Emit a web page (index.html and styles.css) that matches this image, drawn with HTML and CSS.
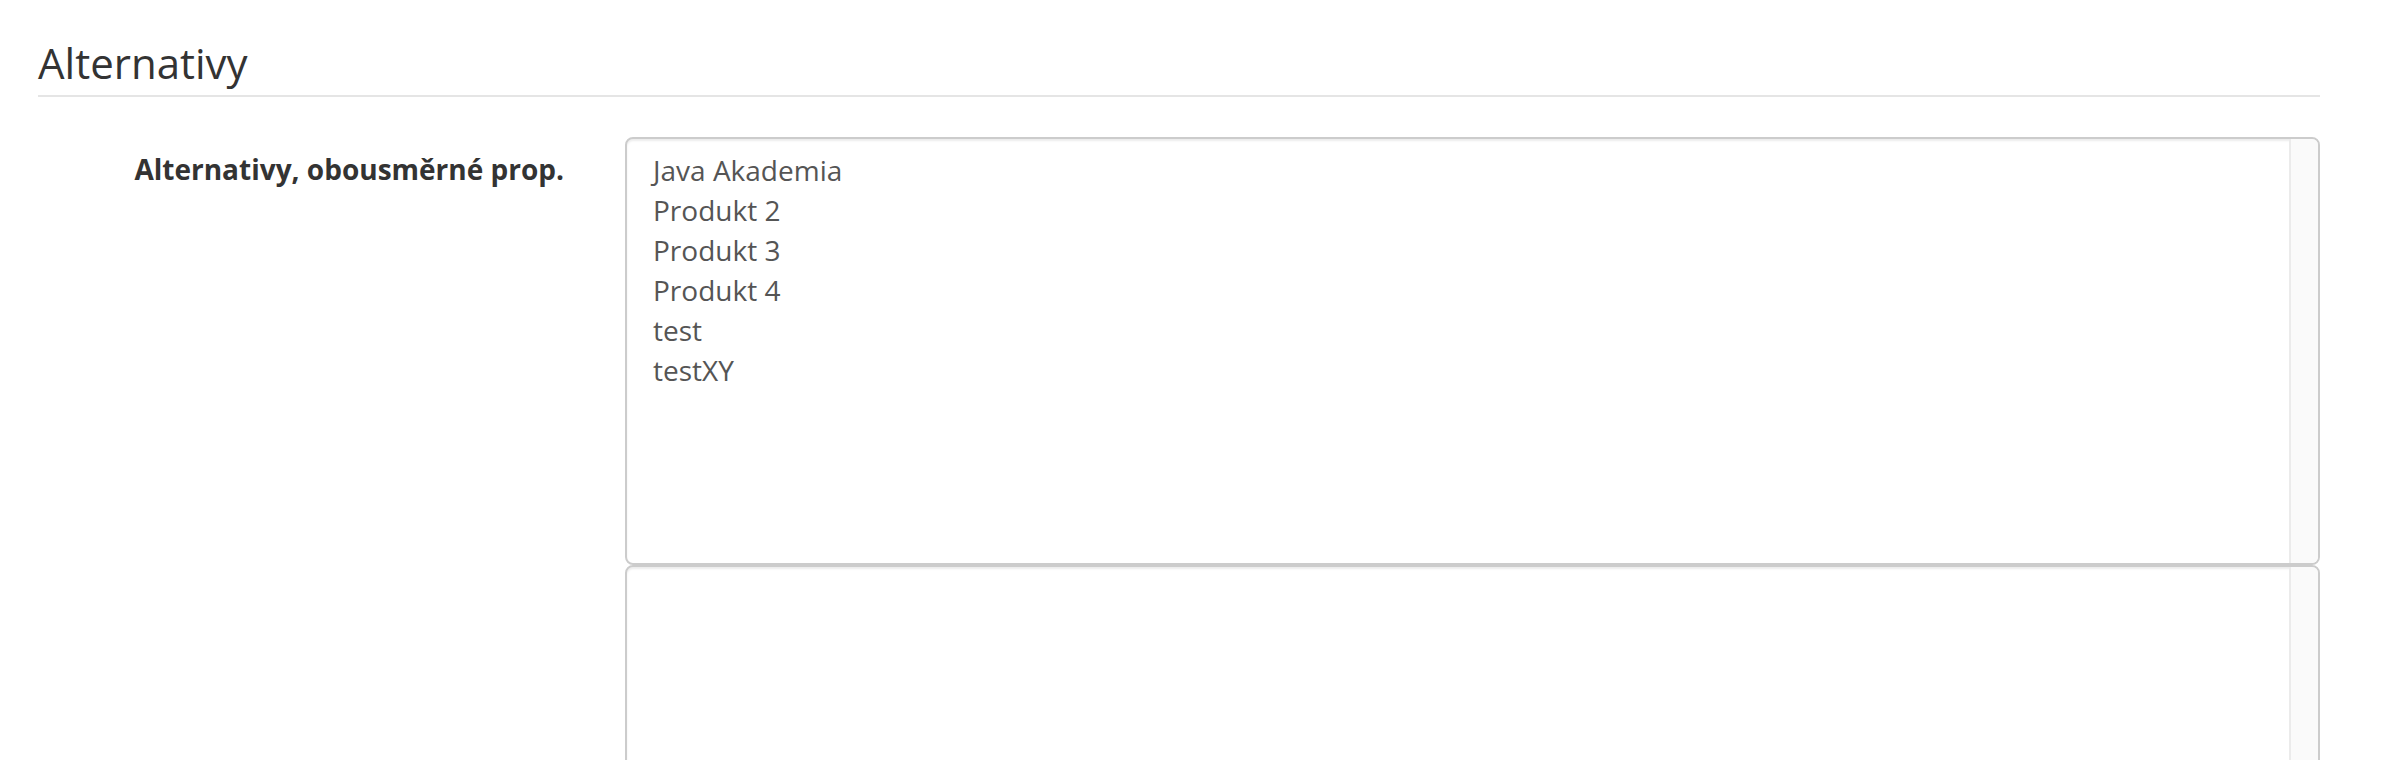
FILE: index.html
```html
<!DOCTYPE html>
<html lang="cs">
<head>
<meta charset="utf-8">
<title>Alternativy</title>
<link rel="stylesheet" href="styles.css">
</head>
<body>
<div class="page">
  <fieldset class="section">
    <legend class="section-title">Alternativy</legend>
    <div class="form-row">
      <label class="form-label">Alternativy, obousměrné prop.</label>
      <div class="form-field">
        <div class="listbox listbox-top">
          <ul class="listbox-items">
            <li>Java Akademia</li>
            <li>Produkt 2</li>
            <li>Produkt 3</li>
            <li>Produkt 4</li>
            <li>test</li>
            <li>testXY</li>
          </ul>
          <div class="listbox-track"></div>
        </div>
        <div class="listbox listbox-bottom">
          <ul class="listbox-items"></ul>
          <div class="listbox-track"></div>
        </div>
      </div>
    </div>
  </fieldset>
</div>
</body>
</html>
```
FILE: styles.css
```css
html, body {
  margin: 0;
  padding: 0;
  background: #ffffff;
}
body {
  font-family: "Open Sans", "Noto Sans", sans-serif;
  color: #333333;
  overflow: hidden;
}
.page {
  padding: 40px 78px 0 38px;
}
.section {
  margin: 0;
  padding: 0;
  border: 0;
  min-width: 0;
}
.section-title {
  display: block;
  width: 100%;
  padding: 0 0 9px 0;
  margin: 0;
  font-size: 42px;
  line-height: 46px;
  font-weight: 400;
  color: #333333;
  border-bottom: 2px solid #e5e5e5;
}
.form-row {
  display: flex;
  align-items: flex-start;
  margin-top: 40px;
}
.form-label {
  flex: 0 0 526px;
  text-align: right;
  font-weight: 700;
  font-size: 28px;
  line-height: 40px;
  padding-top: 12px;
  color: #333333;
}
.form-field {
  flex: 1;
  margin-left: 61px;
  display: flex;
  flex-direction: column;
}
.listbox {
  display: flex;
  border: 2px solid #cccccc;
  border-radius: 8px;
  box-shadow: inset 0 2px 2px rgba(0, 0, 0, 0.075);
  background: #ffffff;
  overflow: hidden;
}
.listbox-top {
  height: 424px;
}
.listbox-bottom {
  height: 400px;
}
.listbox-items {
  flex: 1;
  list-style: none;
  margin: 0;
  padding: 11px 24px 0 26px;
  font-size: 28px;
  line-height: 40px;
  color: #555555;
}
.listbox-track {
  flex: 0 0 27px;
  background: #fafafa;
  border-left: 2px solid #ebebeb;
}
```
